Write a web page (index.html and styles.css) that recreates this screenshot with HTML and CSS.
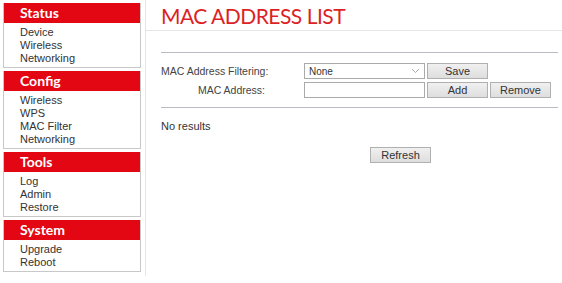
FILE: index.html
```html
<!DOCTYPE html>
<html lang="en">
<head>
    <meta charset="UTF-8">
    <meta name="viewport" content="width=device-width, initial-scale=1.0">
    <title>MAC Address List</title>
    <link rel="stylesheet" href="styles.css">
</head>
<body>
    <div class="page">
        <div class="sidebar">
            <div class="menu">
                <div class="menu-title">Status</div>
                <div class="menu-items">
                    <a href="#">Device</a>
                    <a href="#">Wireless</a>
                    <a href="#">Networking</a>
                </div>
            </div>
            <div class="menu">
                <div class="menu-title">Config</div>
                <div class="menu-items">
                    <a href="#">Wireless</a>
                    <a href="#">WPS</a>
                    <a href="#">MAC Filter</a>
                    <a href="#">Networking</a>
                </div>
            </div>
            <div class="menu">
                <div class="menu-title">Tools</div>
                <div class="menu-items">
                    <a href="#">Log</a>
                    <a href="#">Admin</a>
                    <a href="#">Restore</a>
                </div>
            </div>
            <div class="menu">
                <div class="menu-title">System</div>
                <div class="menu-items">
                    <a href="#">Upgrade</a>
                    <a href="#">Reboot</a>
                </div>
            </div>
        </div>

        <div class="main">
            <h1 class="page-title">MAC ADDRESS LIST</h1>
            <div class="content">
                <div class="divider"></div>
                <div class="form-grid">
                    <label class="form-label">MAC Address Filtering:</label>
                    <div class="select-wrap">
                        <select class="field">
                            <option>None</option>
                            <option>Allow</option>
                            <option>Deny</option>
                        </select>
                        <svg class="chevron" width="9" height="6" viewBox="0 0 9 6">
                            <path d="M1 1 L4.5 4.5 L8 1" fill="none" stroke="#aaa" stroke-width="1"/>
                        </svg>
                    </div>
                    <div class="buttons">
                        <button class="btn">Save</button>
                    </div>

                    <label class="form-label">MAC Address:</label>
                    <input class="field" type="text">
                    <div class="buttons">
                        <button class="btn">Add</button>
                        <button class="btn">Remove</button>
                    </div>
                </div>
                <div class="divider"></div>
                <p class="no-results">No results</p>
                <div class="refresh-row">
                    <button class="btn">Refresh</button>
                </div>
            </div>
        </div>
    </div>
</body>
</html>
```

FILE: styles.css
```css
body {
    margin: 0;
    font-family: "Liberation Sans", Arial, sans-serif;
    font-size: 11px;
    color: #333;
    background-color: #fff;
}
.page {
    display: flex;
    height: 276px;
}
.sidebar {
    width: 138px;
    padding: 3px 4px 0 3px;
    border-right: 1px solid #e4e6e8;
    display: flex;
    flex-direction: column;
    gap: 3px;
}
.menu {
    border: 1px solid #c8c8c8;
    border-top: none;
}
.menu-title {
    background-color: #e30613;
    color: white;
    font-family: Lato, "Open Sans", sans-serif;
    font-weight: bold;
    font-size: 14px;
    height: 20px;
    line-height: 20px;
    padding-left: 16px;
}
.menu-items {
    padding: 3px 0 2px 16px;
    display: flex;
    flex-direction: column;
}
.menu-items a {
    color: #333;
    text-decoration: none;
    line-height: 13px;
}
.main {
    flex: 1;
}
.page-title {
    margin: 0;
    height: 30px;
    padding-left: 15px;
    border-bottom: 1px solid #e4e6e8;
    color: #dd1f26;
    font-family: Lato, "Open Sans", sans-serif;
    font-weight: normal;
    font-size: 21px;
    letter-spacing: -0.5px;
    line-height: 32px;
}
.content {
    padding: 21px 4px 0 15px;
}
.divider {
    height: 1px;
    background-color: #b8bcc0;
}
.form-grid {
    display: grid;
    grid-template-columns: 104px 121px auto;
    column-gap: 39px;
    row-gap: 3px;
    align-items: center;
    margin: 10px 0 9px;
}
.form-grid .field {
    grid-column: 2;
}
.form-label {
    text-align: right;
    white-space: nowrap;
    color: #444;
    font-size: 10.5px;
}
.buttons {
    display: flex;
    gap: 2px;
    margin-left: -37px;
}
.select-wrap {
    position: relative;
}
.field {
    box-sizing: border-box;
    width: 121px;
    height: 16px;
    border: 1px solid #aaa;
    background-color: white;
    font-family: "Liberation Sans", Arial, sans-serif;
    font-size: 10px;
    color: #333;
    padding: 0 4px;
    margin: 0;
    border-radius: 0;
    appearance: none;
    outline: none;
}
.chevron {
    position: absolute;
    right: 5px;
    top: 5px;
}
.btn {
    box-sizing: border-box;
    width: 61px;
    height: 16px;
    padding: 0;
    border: 1px solid #b0b0b0;
    border-radius: 0;
    background: linear-gradient(#f0f0f0, #dedede);
    font-family: "Liberation Sans", Arial, sans-serif;
    font-size: 11px;
    color: #333;
    line-height: 14px;
}
.no-results {
    margin: 12px 0 0;
    line-height: 13px;
}
.refresh-row {
    margin-top: 14px;
    padding-left: 209px;
}
```
